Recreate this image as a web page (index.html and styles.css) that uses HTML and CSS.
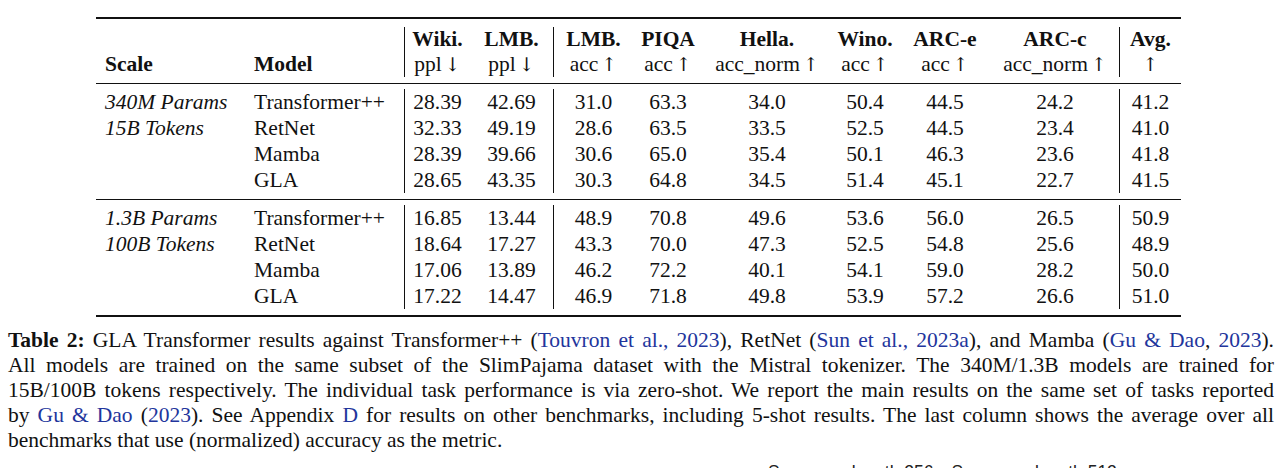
FILE: index.html
```html
<!DOCTYPE html>
<html>
<head>
<meta charset="utf-8">
<link rel="stylesheet" href="styles.css">
</head>
<body>
<div class="page">
  <table class="results">
    <colgroup>
      <col class="c-scale"><col class="c-model"><col class="c-wiki"><col class="c-lmbp">
      <col class="c-lmba"><col class="c-piqa"><col class="c-hella"><col class="c-wino">
      <col class="c-arce"><col class="c-arcc"><col class="c-avg">
    </colgroup>
    <tbody>
      <tr class="rule"><td colspan="11"><div class="line top"></div></td></tr>
      <tr class="head h1">
        <td></td><td></td>
        <td class="vl"><b>Wiki.</b></td><td><b>LMB.</b></td>
        <td class="vl"><b>LMB.</b></td><td><b>PIQA</b></td><td><b>Hella.</b></td><td><b>Wino.</b></td><td><b>ARC-e</b></td><td><b>ARC-c</b></td>
        <td class="vl"><b>Avg.</b></td>
      </tr>
      <tr class="head h2">
        <td class="l"><b>Scale</b></td><td class="l"><b>Model</b></td>
        <td class="vl">ppl<span class="arr">↓</span></td><td>ppl<span class="arr">↓</span></td>
        <td class="vl">acc<span class="arr">↑</span></td><td>acc<span class="arr">↑</span></td><td>acc_norm<span class="arr">↑</span></td><td>acc<span class="arr">↑</span></td><td>acc<span class="arr">↑</span></td><td>acc_norm<span class="arr">↑</span></td>
        <td class="vl"><span class="arr solo">↑</span></td>
      </tr>
      <tr class="rule"><td colspan="11"><div class="line mid"></div></td></tr>
      <tr class="row"><td class="l scale">340M Params</td><td class="l">Transformer++</td><td class="vl">28.39</td><td>42.69</td><td class="vl">31.0</td><td>63.3</td><td>34.0</td><td>50.4</td><td>44.5</td><td>24.2</td><td class="vl">41.2</td></tr>
      <tr class="row"><td class="l scale">15B Tokens</td><td class="l">RetNet</td><td class="vl">32.33</td><td>49.19</td><td class="vl">28.6</td><td>63.5</td><td>33.5</td><td>52.5</td><td>44.5</td><td>23.4</td><td class="vl">41.0</td></tr>
      <tr class="row"><td class="l scale"></td><td class="l">Mamba</td><td class="vl">28.39</td><td>39.66</td><td class="vl">30.6</td><td>65.0</td><td>35.4</td><td>50.1</td><td>46.3</td><td>23.6</td><td class="vl">41.8</td></tr>
      <tr class="row"><td class="l scale"></td><td class="l">GLA</td><td class="vl">28.65</td><td>43.35</td><td class="vl">30.3</td><td>64.8</td><td>34.5</td><td>51.4</td><td>45.1</td><td>22.7</td><td class="vl">41.5</td></tr>
      <tr class="rule"><td colspan="11"><div class="line mid"></div></td></tr>
      <tr class="row"><td class="l scale">1.3B Params</td><td class="l">Transformer++</td><td class="vl">16.85</td><td>13.44</td><td class="vl">48.9</td><td>70.8</td><td>49.6</td><td>53.6</td><td>56.0</td><td>26.5</td><td class="vl">50.9</td></tr>
      <tr class="row"><td class="l scale">100B Tokens</td><td class="l">RetNet</td><td class="vl">18.64</td><td>17.27</td><td class="vl">43.3</td><td>70.0</td><td>47.3</td><td>52.5</td><td>54.8</td><td>25.6</td><td class="vl">48.9</td></tr>
      <tr class="row"><td class="l scale"></td><td class="l">Mamba</td><td class="vl">17.06</td><td>13.89</td><td class="vl">46.2</td><td>72.2</td><td>40.1</td><td>54.1</td><td>59.0</td><td>28.2</td><td class="vl">50.0</td></tr>
      <tr class="row"><td class="l scale"></td><td class="l">GLA</td><td class="vl">17.22</td><td>14.47</td><td class="vl">46.9</td><td>71.8</td><td>49.8</td><td>53.9</td><td>57.2</td><td>26.6</td><td class="vl">51.0</td></tr>
      <tr class="rule"><td colspan="11"><div class="line bottom"></div></td></tr>
    </tbody>
  </table>

  <div class="caption">
    <span class="cl"><b>Table 2:</b> GLA Transformer results against Transformer++ (<span class="cite">Touvron et al., 2023</span>), RetNet (<span class="cite">Sun et al., 2023a</span>), and Mamba (<span class="cite">Gu &amp; Dao</span>, <span class="cite">2023</span>).</span>
    <span class="cl">All models are trained on the same subset of the SlimPajama dataset with the Mistral tokenizer. The 340M/1.3B models are trained for</span>
    <span class="cl">15B/100B tokens respectively. The individual task performance is via zero-shot. We report the main results on the same set of tasks reported</span>
    <span class="cl">by <span class="cite">Gu &amp; Dao</span> (<span class="cite">2023</span>). See Appendix <span class="cite">D</span> for results on other benchmarks, including 5-shot results. The last column shows the average over all</span>
    <span class="cl last">benchmarks that use (normalized) accuracy as the metric.</span>
  </div>

  <div class="next-fig">
    <span>Sequence length 256</span>
    <span>Sequence length 512</span>
  </div>
</div>
</body>
</html>
```

FILE: styles.css
```css
html, body {
  margin: 0;
  padding: 0;
  background: #ffffff;
  height: 468px;
  overflow: hidden;
}

.page {
  font-family: "Liberation Serif", "Times New Roman", serif;
  color: #111;
  padding-top: 17px;
}

.results {
  margin-left: 96px;
  border-collapse: separate;
  border-spacing: 0;
  table-layout: fixed;
  width: 1085px;
  font-size: 21.5px;
}

.c-scale { width: 149px; }
.c-model { width: 159px; }
.c-wiki  { width: 66px; }
.c-lmbp  { width: 83px; }
.c-lmba  { width: 80px; }
.c-piqa  { width: 70px; }
.c-hella { width: 128px; }
.c-wino  { width: 68px; }
.c-arce  { width: 92px; }
.c-arcc  { width: 128px; }
.c-avg   { width: 62px; }

.results td {
  padding: 0;
  text-align: center;
  white-space: nowrap;
}

.results td.l {
  text-align: left;
  padding-left: 9px;
}

.results td.scale {
  font-style: italic;
}

.results td.vl {
  border-left: 1px solid #111;
}

.arr {
  font-family: "DejaVu Serif", "Liberation Serif", serif;
  font-weight: normal;
  color: #111;
  font-size: 19px;
  margin-left: 3px;
}

.arr.solo {
  margin-left: 0;
}

.head td {
  height: 25px;
  line-height: 25px;
}

.h1 td { vertical-align: bottom; }

.row td {
  height: 26px;
  line-height: 26px;
}

.rule td {
  padding: 0;
}

.line {
  border-top: 1px solid #111;
}

.line.top {
  border-top-width: 2px;
  margin-bottom: 8px;
}

.line.mid {
  margin: 6px 0 5px;
}

.line.bottom {
  border-top-width: 2px;
  margin-top: 6px;
}

.caption {
  margin: 11px 0 0 8px;
  width: 1266px;
  font-size: 21.5px;
  line-height: 25px;
}

.cl {
  display: block;
  white-space: nowrap;
  text-align: justify;
  text-align-last: justify;
}

.cl.last {
  text-align: left;
  text-align-last: left;
}

.cite {
  color: #22359c;
}

.next-fig {
  display: flex;
  gap: 18px;
  margin-left: 768px;
  margin-top: 9px;
  font-family: "Liberation Sans", Arial, sans-serif;
  font-size: 17.5px;
  line-height: 20px;
  color: #222;
}
```
